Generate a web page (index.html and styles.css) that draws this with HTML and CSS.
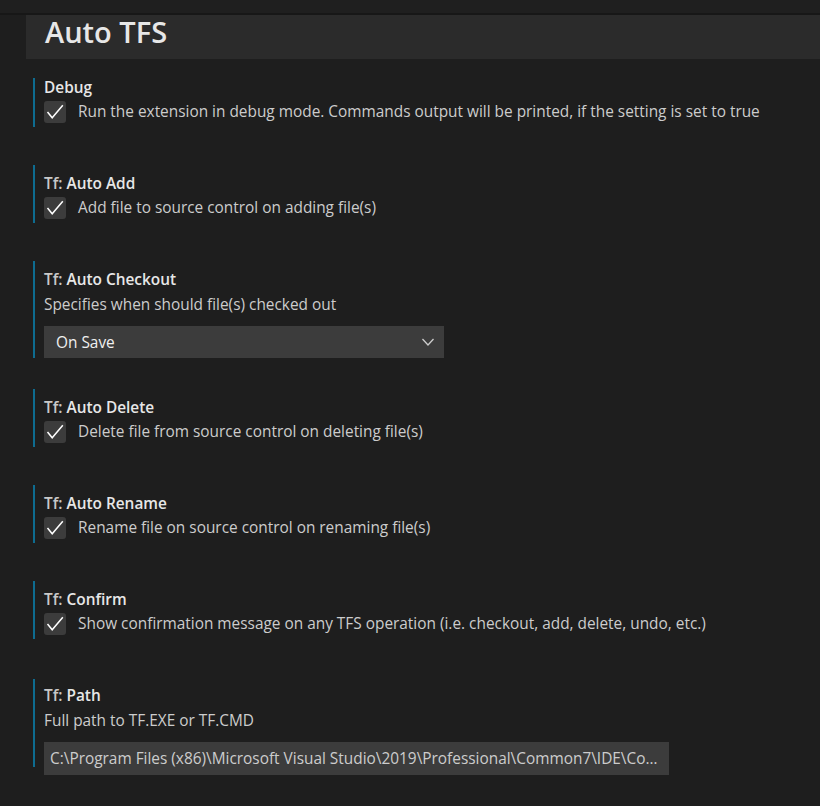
FILE: index.html
```html
<!DOCTYPE html>
<html>
<head>
<meta charset="utf-8">
<link rel="stylesheet" href="styles.css">
</head>
<body>
<div class="topbar"></div>
<div class="page">
  <div class="header"><h1 class="title">Auto TFS</h1></div>
  <div class="list">
    <div class="item first">
      <div class="label"><b>Debug</b></div>
      <label class="check-row"><span class="box"><svg viewBox="0 0 22 22" width="22" height="22"><path d="M3.5 11 L8.2 16.8 L18.8 4.2" fill="none" stroke="#ffffff" stroke-width="1.5"/></svg></span><span class="desc">Run the extension in debug mode. Commands output will be printed, if the setting is set to true</span></label>
    </div>
    <div class="item">
      <div class="label"><span class="cat">Tf: </span><b>Auto Add</b></div>
      <label class="check-row"><span class="box"><svg viewBox="0 0 22 22" width="22" height="22"><path d="M3.5 11 L8.2 16.8 L18.8 4.2" fill="none" stroke="#ffffff" stroke-width="1.5"/></svg></span><span class="desc">Add file to source control on adding file(s)</span></label>
    </div>
    <div class="item tall">
      <div class="label"><span class="cat">Tf: </span><b>Auto Checkout</b></div>
      <div class="desc plain">Specifies when should file(s) checked out</div>
      <div class="select"><span>On Save</span><svg viewBox="0 0 16 16" width="16" height="16"><path d="M2.5 5 L8 11 L13.5 5" fill="none" stroke="#cccccc" stroke-width="1.3"/></svg></div>
    </div>
    <div class="item">
      <div class="label"><span class="cat">Tf: </span><b>Auto Delete</b></div>
      <label class="check-row"><span class="box"><svg viewBox="0 0 22 22" width="22" height="22"><path d="M3.5 11 L8.2 16.8 L18.8 4.2" fill="none" stroke="#ffffff" stroke-width="1.5"/></svg></span><span class="desc">Delete file from source control on deleting file(s)</span></label>
    </div>
    <div class="item">
      <div class="label"><span class="cat">Tf: </span><b>Auto Rename</b></div>
      <label class="check-row"><span class="box"><svg viewBox="0 0 22 22" width="22" height="22"><path d="M3.5 11 L8.2 16.8 L18.8 4.2" fill="none" stroke="#ffffff" stroke-width="1.5"/></svg></span><span class="desc">Rename file on source control on renaming file(s)</span></label>
    </div>
    <div class="item">
      <div class="label"><span class="cat">Tf: </span><b>Confirm</b></div>
      <label class="check-row"><span class="box"><svg viewBox="0 0 22 22" width="22" height="22"><path d="M3.5 11 L8.2 16.8 L18.8 4.2" fill="none" stroke="#ffffff" stroke-width="1.5"/></svg></span><span class="desc">Show confirmation message on any TFS operation (i.e. checkout, add, delete, undo, etc.)</span></label>
    </div>
    <div class="item path">
      <div class="label"><span class="cat">Tf: </span><b>Path</b></div>
      <div class="desc plain">Full path to TF.EXE or TF.CMD</div>
      <div class="input">C:\Program Files (x86)\Microsoft Visual Studio\2019\Professional\Common7\IDE\CommonExtensions\Microsoft\TeamFoundation\Team Explorer\TF.exe</div>
    </div>
  </div>
</div>
</body>
</html>
```
FILE: styles.css
```css
html, body {
  margin: 0;
  padding: 0;
  background: #1e1e1e;
  height: 100%;
  overflow: hidden;
}
body {
  font-family: "Open Sans", "Noto Sans", sans-serif;
  color: #cccccc;
  font-size: 15.4px;
}
.topbar {
  height: 13px;
  background: #1f1f1f;
  border-bottom: 2px solid #171717;
}
.page {
  padding-left: 26px;
}
.header {
  background: #2b2b2b;
  height: 44px;
  box-sizing: border-box;
  padding: 1px 0 0 19px;
}
.title {
  margin: 0;
  font-size: 29px;
  font-weight: 600;
  color: #e7e7e7;
  line-height: 32px;
}
.list {
  padding-top: 10px;
  padding-left: 7px;
}
.item {
  position: relative;
  padding: 9px 0 3px 11px;
  margin-bottom: 38px;
}
.item::before {
  content: "";
  position: absolute;
  left: 0;
  top: 0;
  bottom: 0;
  width: 2px;
  background: #0e6c90;
}
.item.first::before {
  top: 9px;
}
.item.tall {
  padding-bottom: 0;
  margin-bottom: 31px;
}
.item.path {
  padding-bottom: 0;
}
.item.path::before {
  top: 2px;
  bottom: 8px;
}
.label {
  line-height: 20px;
  color: #cccccc;
  margin-bottom: 2px;
  white-space: nowrap;
}
.label b {
  font-weight: 600;
  color: #e7e7e7;
}
.cat {
  color: #c8c8c8;
  font-weight: 600;
}
.check-row {
  display: flex;
  align-items: center;
  gap: 12px;
  height: 24px;
}
.box {
  width: 22px;
  height: 22px;
  background: #3c3c3c;
  border-radius: 3px;
  flex-shrink: 0;
}
.box svg {
  display: block;
}
.desc {
  color: #cccccc;
  line-height: 22px;
  white-space: nowrap;
}
.plain {
  padding-top: 2px;
  margin-bottom: 10px;
}
.select {
  width: 400px;
  height: 32px;
  box-sizing: border-box;
  background: #3c3c3c;
  display: flex;
  align-items: center;
  justify-content: space-between;
  padding: 0 8px 0 12px;
  color: #f0f0f0;
}
.input {
  width: 625px;
  height: 33px;
  box-sizing: border-box;
  background: #3c3c3c;
  padding: 0 6px;
  line-height: 33px;
  white-space: nowrap;
  overflow: hidden;
  text-overflow: ellipsis;
  color: #cccccc;
}
```
